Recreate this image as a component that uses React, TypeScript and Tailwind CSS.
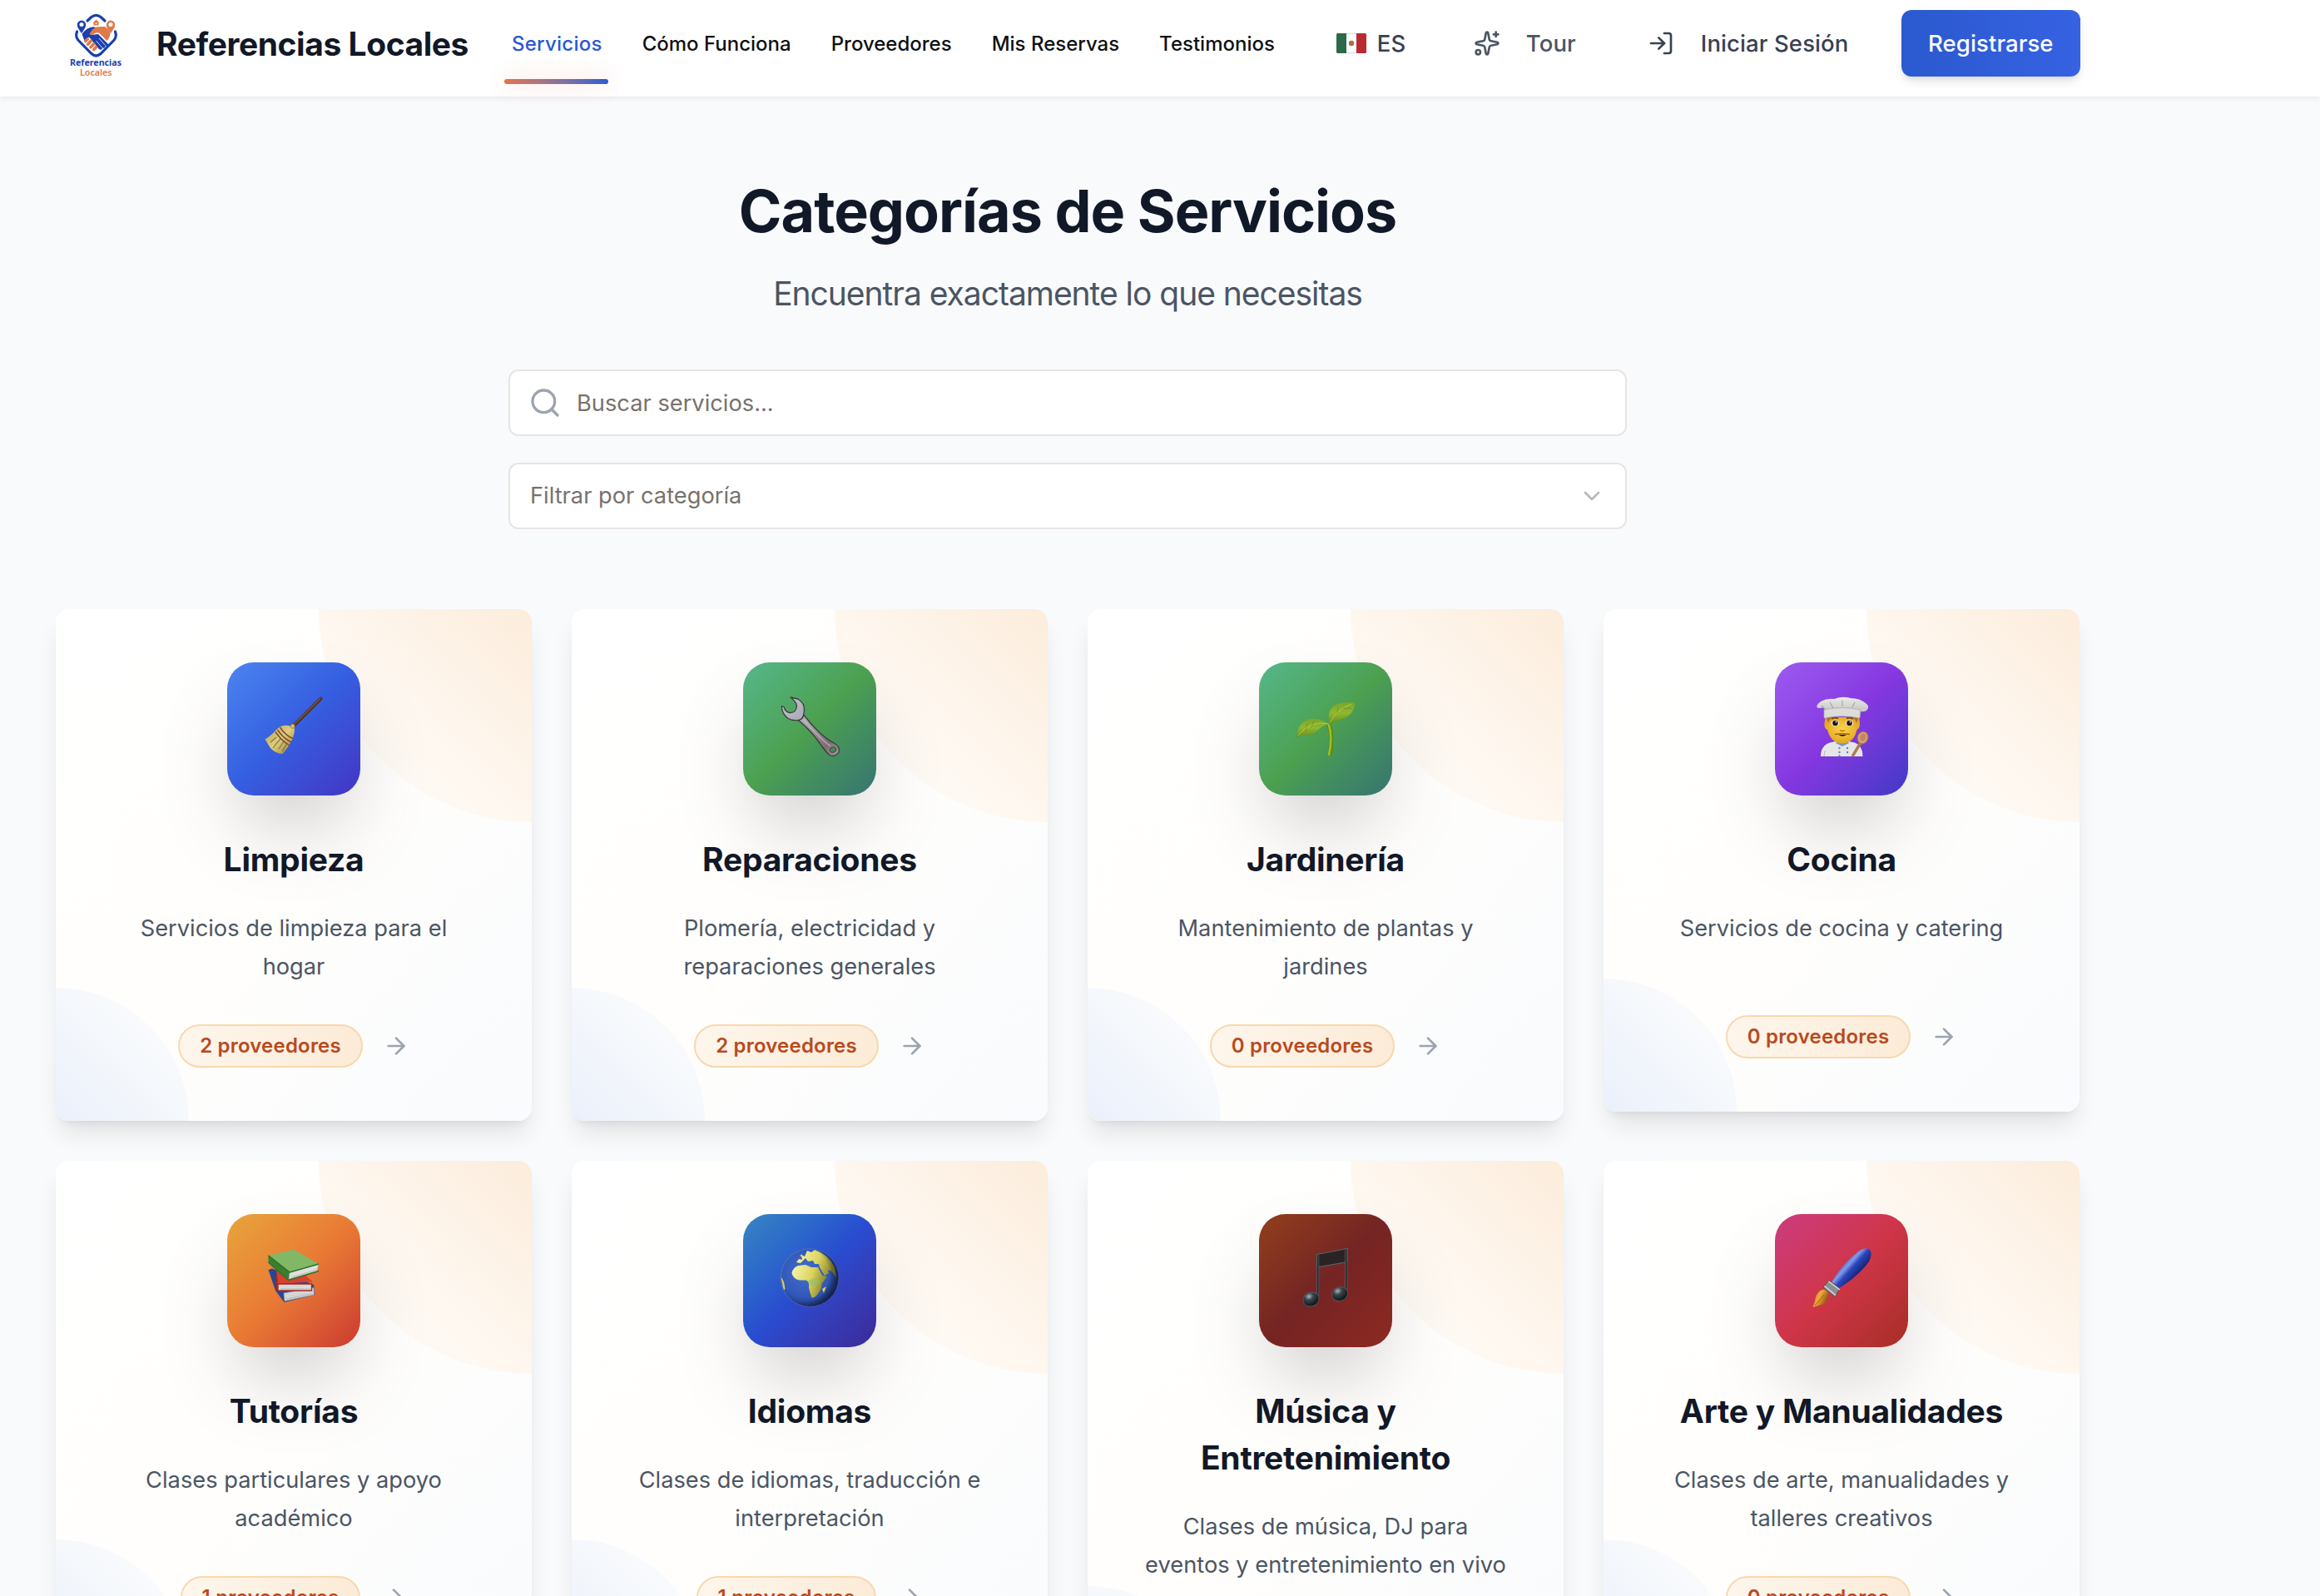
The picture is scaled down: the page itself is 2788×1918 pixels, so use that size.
import type { ReactNode } from "react";
import { ArrowRight, ChevronDown, LogIn, Search, Sparkles } from "lucide-react";

function Logo() {
  return (
    <svg viewBox="0 0 84 90" className="h-[90px] w-[84px] shrink-0" fill="none">
      <g stroke="#1b3fae" strokeWidth="3.2" strokeLinecap="round">
        <path d="M31 17 L35.5 12.8 Q41.5 7.8 47.5 12.8 L52 17" />
        <path d="M18.6 30 Q16.2 35.5 19.8 40 L36 56.5 Q41.5 61.5 47 56.5 L63.2 40 Q66.8 35.500 64.400 30" />
      </g>
      <path d="M24 32 C20.500 27 18.800 24.500 18.800 21.700 a5.200 5.200 0 0 1 10.400 0 C29.200 24.500 27.500 27 24 32Z" fill="#1b3fae" />
      <circle cx="24" cy="21.500" r="2.500" fill="#fff" />
      <path d="M59 32 C55.500 27 53.800 24.500 53.800 21.700 a5.200 5.200 0 0 1 10.400 0 C64.200 24.500 62.500 27 59 32Z" fill="#dc7a48" />
      <circle cx="59" cy="21.500" r="2.500" fill="#fff" />
      <path d="M37.500 19.500 L41.500 15.500 L45.500 19.500 L44.500 19.500 V22.500 H38.500 V19.500Z" fill="#dc7a48" />
      <rect x="40.800" y="19.300" width="1.600" height="1.800" fill="#fff" />
      <path d="M24.500 33 Q29 25.500 38 24.200 L42 25 L35 34 L44 33 L56 45 Q55.500 48 52.500 47 Q52.500 50.500 49 49.500 Q48.500 53 45 51 L33 36.500 L27.500 41 Z" fill="#1b3fae" />
      <path d="M33.500 32.500 Q37 25.500 43 24.200 L52 24 Q57 27 58.500 32 Q58 38 54.500 41 L45.500 32 Q41 30 37 34 Q34 34.500 33.500 32.500Z" fill="#dc7a48" />
      <g stroke="#dc7a48" strokeWidth="3.600" strokeLinecap="round">
        <path d="M28.800 41.500 L31.300 38.800" />
        <path d="M31.600 45.300 L35.300 41.300" />
        <path d="M35 48.800 L38.700 44.800" />
        <path d="M38.800 51.600 L41.500 48.500" />
      </g>
      <g stroke="#fff" strokeWidth="0.8">
        <path d="M45 38 L52.500 46.500" />
        <path d="M41.500 41 L49 49.500" />
      </g>
      <text x="10" y="70.700" textLength="62" lengthAdjust="spacingAndGlyphs" fontFamily="Noto Sans, sans-serif" fontWeight="700" fontSize="11" fill="#1b3fae">Referencias</text>
      <text x="22" y="82.700" textLength="38.500" lengthAdjust="spacingAndGlyphs" fontFamily="Noto Sans, sans-serif" fontWeight="600" fontSize="11" fill="#dc7a48">Locales</text>
    </svg>
  );
}

function MexicoFlag() {
  return (
    <svg viewBox="0 0 36 24" className="h-6 w-9 shrink-0">
      <rect width="36" height="24" rx="1.500" fill="#fff" />
      <path d="M1.500 0 H12 V24 H1.500 Q0 24 0 22.500 V1.500 Q0 0 1.500 0Z" fill="#2b6a4a" />
      <path d="M24 0 H34.500 Q36 0 36 1.500 V22.500 Q36 24 34.500 24 H24Z" fill="#bb2a31" />
      <path d="M12 0.500 H24 M12 23.500 H24" stroke="#d5dcd9" />
      <circle cx="18" cy="12" r="3.200" fill="#a5714a" />
    </svg>
  );
}

function Broom() {
  return (
    <>
      <defs>
        <linearGradient id="straw" x1="0" y1="0" x2="1" y2="1">
          <stop offset="0" stopColor="#b39a4f" />
          <stop offset="0.5" stopColor="#dfcd80" />
          <stop offset="1" stopColor="#8d7430" />
        </linearGradient>
      </defs>
      <path d="M36 36 L68.500 3.500" stroke="#4d3023" strokeWidth="4" strokeLinecap="round" />
      <path d="M36 35 L68 3.200" stroke="#7d553b" strokeWidth="1.400" strokeLinecap="round" />
      <path d="M32 36.500 Q35 33.500 37 36.500 Q37.500 44 35 51 Q30.500 61 22.500 70 Q14 69.500 8 63 L1.500 52.500 Q10 47 15 41 Q22 33.500 32 36.500Z" fill="url(#straw)" />
      <path d="M13 60 L20 52 M18 64 L24 55 M8 56 L15 50 M22 67 L28 57 M11 63 L17 55" stroke="#6e5a22" strokeWidth="1.200" opacity="0.700" />
      <path d="M14 43.500 Q21 54 30.500 59.500 M16.500 41 Q23 51 33 56 M19.500 38 Q26 48 35 51.500" stroke="#7a4a2b" strokeWidth="1.400" fill="none" />
      <circle cx="34.700" cy="36.700" r="2.600" fill="#d8c06e" stroke="#7a5a2b" strokeWidth="0.600" />
    </>
  );
}

function Wrench() {
  return (
    <>
      <defs>
        <linearGradient id="steel" x1="0" y1="0" x2="1" y2="1">
          <stop offset="0" stopColor="#c3c5d2" />
          <stop offset="0.450" stopColor="#a7a4ac" />
          <stop offset="0.800" stopColor="#7c6c6e" />
          <stop offset="1" stopColor="#a59ea3" />
        </linearGradient>
      </defs>
      <path d="M13 2 L22 4 Q30 9 29.500 17 Q29.500 20 28.500 22.500 Q37 34 47 43.500 Q55 51.500 66 57.500 Q73 61.500 71 68 Q67 74.500 60 71.500 Q56 68 51 61.500 Q43 49 32 38 L22.500 29.500 Q15 30.500 9.500 27 Q2 21 2.500 12.500 L5 13.500 Q7 20 12 20.500 Q20 21 20.500 12 Q19.500 7 13 2Z" fill="url(#steel)" stroke="#3e3b3c" strokeWidth="1.300" strokeLinejoin="round" />
      <path d="M28 28 Q37 39 46 47.500 Q54 56 61 60.500" stroke="#c9c6cd" strokeWidth="1.500" fill="none" opacity="0.600" />
      <path d="M28.500 23.500 Q28 28 23 29.500" stroke="#3b3335" strokeWidth="1.500" fill="none" />
      <ellipse cx="64" cy="65" rx="3.800" ry="3" transform="rotate(-25 64 65)" fill="#438a5e" stroke="#4b4445" />
    </>
  );
}

function Seedling() {
  return (
    <>
      <defs>
        <linearGradient id="leaf" x1="0" y1="0" x2="0" y2="1">
          <stop offset="0" stopColor="#7ba528" />
          <stop offset="0.500" stopColor="#8fb82e" />
          <stop offset="1" stopColor="#688c18" />
        </linearGradient>
      </defs>
      <path d="M39.500 34 Q46 50 40.500 72" stroke="#5f8a14" strokeWidth="5.500" fill="none" />
      <path d="M39.500 34 Q45 50 39.800 72" stroke="#98bf2c" strokeWidth="2.600" fill="none" />
      <path d="M0.500 50.500 Q3 31 18 27.500 Q29 26.500 39.500 34 Q32 36 26 42 Q18 49 7 47 Q3 48 0.500 50.500Z" fill="url(#leaf)" />
      <path d="M40.500 34 Q37 17 48 11 Q57 6.500 71.500 8.500 Q70 21 61 26 Q50 30 40.500 34Z" fill="url(#leaf)" />
      <path d="M3 48 Q17 30 39 33.500 M41 33 Q49 17 67 10" stroke="#b8ce62" strokeWidth="0.800" fill="none" />
      <path d="M12 43 L14 33 M19 38 L22 30 M50 21 L51 13 M57 15.500 L67 15" stroke="#5f8414" strokeWidth="1" opacity="0.500" />
    </>
  );
}

function Chef() {
  return (
    <>
      <defs>
        <radialGradient id="face" cx="0.500" cy="0.450" r="0.600">
          <stop offset="0" stopColor="#fbd44a" />
          <stop offset="1" stopColor="#dfa01c" />
        </radialGradient>
        <linearGradient id="hat" x1="0" y1="0" x2="0" y2="1">
          <stop offset="0" stopColor="#ebebe9" />
          <stop offset="1" stopColor="#b5b4b1" />
        </linearGradient>
      </defs>
      <path d="M11 73 Q11 60 22 56.500 L33 54 H40 L52 56.500 Q61.500 60 61.500 73Z" fill="#e6e6e4" />
      <path d="M15 73 L16 66" stroke="#b9b9b9" />
      <path d="M29 57 L37 61 L45 57 L43 55 H31Z" fill="#6d97cf" />
      <path d="M33 52 H42 L37.500 59Z" fill="#cf8d19" />
      <path d="M17 26 Q13 39 19 41 Q23 57 37 57.500 Q51 57 54.500 41 Q60 39 57 26Z" fill="url(#face)" />
      <path d="M18 25 L20 33 Q22 26 28 25Z M56.500 25 L54 33 Q52 26 46 25Z" fill="#a8702c" />
      <path d="M24 28 Q28 25 32 27.500 M42 27.500 Q46 25 50 28" stroke="#7c4a16" strokeWidth="2" fill="none" />
      <ellipse cx="28.500" cy="33" rx="4.500" ry="3.800" fill="#fff" />
      <ellipse cx="45.500" cy="33" rx="4.500" ry="3.800" fill="#fff" />
      <circle cx="28.500" cy="33" r="3.300" fill="#23150d" />
      <circle cx="45.500" cy="33" r="3.300" fill="#23150d" />
      <circle cx="29.500" cy="31.500" r="0.900" fill="#fff" />
      <circle cx="46.500" cy="31.500" r="0.900" fill="#fff" />
      <path d="M34 41.500 Q37 43.500 40 41.500" stroke="#b36e12" strokeWidth="1.500" fill="none" />
      <path d="M28 46.500 Q37 45 46 46.500" stroke="#a3651c" strokeWidth="1.400" fill="none" />
      <path d="M32.500 47 H42 Q37 50.500 32.500 47Z" fill="#25120a" />
      <path d="M15 14 Q8 16 6.500 14 Q5 11 12 6.500 Q18 3 27 4 Q37 0 47 3 Q58 3 65 9 Q70 12 67 17 Q64 20 59 19 L58 26.500 Q37 21 15 27Z" fill="url(#hat)" />
      <path d="M15 17 Q37 12 58.500 17 L58 27 Q37 22.500 15 27Z" fill="#dcdcda" stroke="#a9a8a5" strokeWidth="0.700" />
      <path d="M22 8 L26 15 M37 6 V13 M52 8 L49 14 M12 12 L17 17" stroke="#a7a6a3" strokeWidth="1.200" />
      <g fill="#5c87c9">
        <circle cx="33.500" cy="63" r="1.200" /><circle cx="33.500" cy="68" r="1.200" /><circle cx="33.500" cy="72" r="1.100" />
        <circle cx="43" cy="63" r="1.200" /><circle cx="43" cy="68" r="1.200" />
      </g>
      <path d="M49 73 L60 55" stroke="#b27a55" strokeWidth="3.400" />
      <ellipse cx="61.500" cy="50.500" rx="6.300" ry="7.500" transform="rotate(20 61.500 50.500)" fill="#d9a07a" stroke="#a86f4b" strokeWidth="1.200" />
      <ellipse cx="61.800" cy="50" rx="3.400" ry="4.600" transform="rotate(20 61.800 50)" fill="#c48660" />
    </>
  );
}

function Books() {
  return (
    <>
      <path d="M5.500 27 L10 25.500 L60 45 L61.500 57 L24.500 66 L14 52Z" fill="#2a4690" />
      <path d="M24 55 L60 48.500 L60.500 57 L25 64.500Z" fill="#d5d5d6" stroke="#98989c" strokeWidth="0.600" />
      <path d="M15 27 L46 30 L59 41.500 L17 44Z" fill="#d7412f" />
      <path d="M15 27 L17 44 V52.500 L14.500 50Z" fill="#a52a20" />
      <path d="M17 44 H57.500 V52 H17Z" fill="#dadada" stroke="#a52a20" strokeWidth="1.400" />
      <path d="M5.500 10 L36 2.500 L66 20 L31 30Z" fill="#82b865" />
      <path d="M5.500 10 L31 30 L29.500 39.500 L5.500 18Z" fill="#3a7f2e" />
      <path d="M31 30 L66 20 L64 28.500 L30 38.500Z" fill="#e0e0df" stroke="#9d9d9c" strokeWidth="0.600" />
      <path d="M5.500 10 L31 30 L66 20 M5.500 18 L29.500 39.500 L66 28.500" stroke="#2f7427" strokeWidth="1.600" fill="none" strokeLinejoin="round" />
      <path d="M33 36 L63 27 M20 50 H56 M27 62 L59 55.500" stroke="#a7a7a7" strokeWidth="0.700" />
    </>
  );
}

function Globe() {
  return (
    <>
      <defs>
        <radialGradient id="sea" cx="0.420" cy="0.420" r="0.600">
          <stop offset="0" stopColor="#466fce" />
          <stop offset="0.700" stopColor="#3058b8" />
          <stop offset="1" stopColor="#22357a" />
        </radialGradient>
        <linearGradient id="land" x1="0" y1="0" x2="1" y2="0.300">
          <stop offset="0" stopColor="#f7f6b4" />
          <stop offset="0.600" stopColor="#dcd45e" />
          <stop offset="1" stopColor="#8d8a2e" />
        </linearGradient>
        <radialGradient id="shade" cx="0.380" cy="0.450" r="0.650">
          <stop offset="0.700" stopColor="#000" stopOpacity="0" />
          <stop offset="1" stopColor="#060a20" stopOpacity="0.600" />
        </radialGradient>
      </defs>
      <circle cx="36" cy="36.500" r="34.800" fill="url(#sea)" stroke="#5d7bb8" strokeWidth="0.800" />
      <path d="M14.500 31 Q16 24 22 22 L31 21 L38 24 L46 24 L49 30 L51.500 34 L57 35 L50.500 44 Q50.500 50 46.500 55 Q43 60.500 38.500 60.500 Q36 54 35 48 Q36 42 32 39.500 L24 39.500 Q16 38 14.500 31Z" fill="url(#land)" />
      <path d="M20 18 L23 14 L27 15 L26 9 L30 11 L33 4 L38 6 L42 3 Q58 8 66 24 L68 37 L63 29 L58 27 L59 31 L54 34 L48 24 L47 20 L42 20 L40 16 L34 17 L31 13 L25 19Z" fill="url(#land)" />
      <path d="M24 10 L27 8 L27 12Z M51 50 L56 47 L53 55Z M1.500 36 Q5 38 6.500 50 Q5 53 4 48Z" fill="#d9cd52" />
      <path d="M34 40 L45 36 L49 42 L43 47 L37 46Z" fill="#8fc06c" opacity="0.600" />
      <circle cx="36" cy="36.500" r="35" fill="url(#shade)" />
    </>
  );
}

function Music() {
  return (
    <>
      <defs>
        <radialGradient id="bead" cx="0.450" cy="0.250" r="0.750">
          <stop offset="0" stopColor="#a9b6be" />
          <stop offset="0.350" stopColor="#3b4448" />
          <stop offset="1" stopColor="#0c0e10" />
        </radialGradient>
      </defs>
      <path d="M25.500 8.500 L62 1.500 V17.500 L25.500 24Z" fill="#2a2324" stroke="#596469" strokeWidth="1.200" />
      <path d="M26.700 9 V58 M60.800 3 V52" stroke="#5d686e" strokeWidth="3" />
      <path d="M26.700 9 V58 M60.800 3 V52" stroke="#22272a" strokeWidth="1.600" />
      <ellipse cx="18.500" cy="62.500" rx="9.800" ry="8.300" transform="rotate(-22 18.500 62.500)" fill="url(#bead)" stroke="#4f5b63" strokeWidth="0.900" />
      <ellipse cx="53" cy="56" rx="9.800" ry="8.300" transform="rotate(-22 53 56)" fill="url(#bead)" stroke="#4f5b63" strokeWidth="0.900" />
    </>
  );
}

function Paintbrush() {
  return (
    <>
      <defs>
        <linearGradient id="handle" x1="0.250" y1="0.250" x2="0.700" y2="0.650">
          <stop offset="0" stopColor="#2138a8" />
          <stop offset="0.400" stopColor="#7f9bea" />
          <stop offset="0.600" stopColor="#2b45bd" />
          <stop offset="1" stopColor="#141f6b" />
        </linearGradient>
        <linearGradient id="bristle" x1="0" y1="0" x2="1" y2="0.500">
          <stop offset="0" stopColor="#c97a1e" />
          <stop offset="0.500" stopColor="#f0a83a" />
          <stop offset="1" stopColor="#8a4c10" />
        </linearGradient>
      </defs>
      <path d="M24 42 Q37 20 55 6 Q64 -1 69.500 2.500 Q74 7 69 17 Q56 35 33 49Z" fill="url(#handle)" />
      <path d="M21 39.500 L34 49.500 L28 59.500 L14 48Z" fill="#8f8f90" stroke="#4f4f50" strokeWidth="0.900" />
      <path d="M20.500 41 L34 51 M15.500 46.500 L29 57.500" stroke="#dedede" strokeWidth="1.200" />
      <path d="M13 51 Q18 50 20.500 56 Q21 63 15 68 Q8 70 1.500 72 Q4 66 5 60 Q7 53 13 51Z" fill="url(#bristle)" />
      <path d="M4 70 L15 57" stroke="#9c5b15" strokeWidth="1" />
    </>
  );
}

type Category = {
  title: string[];
  text: string[];
  providers: string;
  tile: string;
  art: ReactNode;
};

const categories: Category[] = [
  { title: ["Limpieza"], text: ["Servicios de limpieza para el", "hogar"], providers: "2 proveedores", tile: "from-[#4c84f0] via-[#355ee0] to-[#4134c4]", art: <Broom /> },
  { title: ["Reparaciones"], text: ["Plomería, electricidad y", "reparaciones generales"], providers: "2 proveedores", tile: "from-[#55b88a] via-[#4ca04f] to-[#37746f]", art: <Wrench /> },
  { title: ["Jardinería"], text: ["Mantenimiento de plantas y", "jardines"], providers: "0 proveedores", tile: "from-[#55b88a] via-[#4ca04f] to-[#37746f]", art: <Seedling /> },
  { title: ["Cocina"], text: ["Servicios de cocina y catering"], providers: "0 proveedores", tile: "from-[#9d5af0] via-[#8537e0] to-[#3f38c6]", art: <Chef /> },
  { title: ["Tutorías"], text: ["Clases particulares y apoyo", "académico"], providers: "1 proveedores", tile: "from-[#e7a43b] via-[#e97a35] to-[#cb3730]", art: <Books /> },
  { title: ["Idiomas"], text: ["Clases de idiomas, traducción e", "interpretación"], providers: "1 proveedores", tile: "from-[#3985c2] via-[#294cd0] to-[#3b2998]", art: <Globe /> },
  { title: ["Música y", "Entretenimiento"], text: ["Clases de música, DJ para", "eventos y entretenimiento en vivo"], providers: "0 proveedores", tile: "from-[#923f1b] via-[#742423] to-[#8e2922]", art: <Music /> },
  { title: ["Arte y Manualidades"], text: ["Clases de arte, manualidades y", "talleres creativos"], providers: "0 proveedores", tile: "from-[#cc3b7e] via-[#cf3548] to-[#a72e25]", art: <Paintbrush /> },
];

function CategoryCard({ title, text, providers, tile, art }: Category) {
  return (
    <article className="relative overflow-hidden rounded-2xl bg-gradient-to-br from-white via-[#fffefc] to-[#f9fbfe] p-16 text-center shadow-[0_20px_30px_-6px_rgba(0,0,0,0.1),0_8px_12px_-8px_rgba(0,0,0,0.1)]">
      <div className="absolute right-0 top-0 size-64 rounded-bl-full bg-gradient-to-bl from-[#fcecdb] via-[#fef7ef] to-[#fffdfb]" />
      <div className="absolute bottom-0 left-0 size-40 rounded-tr-full bg-gradient-to-tr from-[#eaf0fb] via-[#f5f8fc] to-[#fdfdfd]" />
      <div className="relative flex flex-col items-center">
        <div className={"mb-[49px] flex size-40 items-center justify-center rounded-[32px] bg-gradient-to-br pb-2 shadow-[0_50px_100px_-24px_rgba(0,0,0,0.25)] " + tile}>
          <svg viewBox="0 0 72 72" className="size-[72px] overflow-visible">{art}</svg>
        </div>
        <h3 className="mb-8 whitespace-nowrap text-[39px] font-bold leading-[56px] tracking-[-0.25px] text-[#111827]">
          {title.map((line) => (<span key={line} className="block">{line}</span>))}
        </h3>
        <p className="mb-[47px] min-h-20 whitespace-nowrap text-[27.25px] leading-[45.500px] text-[#4b5563]">
          {text.map((line) => (<span key={line} className="block">{line}</span>))}
        </p>
        <div className="flex items-center gap-6">
          <span className="flex h-[52px] items-center whitespace-nowrap rounded-full border-2 border-[#f9d8ad] bg-gradient-to-r from-[#fef6ec] to-[#fcebd7] px-6 text-[24px] font-semibold leading-8 tracking-[0.2px] text-[#b84a1e]">
            {providers}
          </span>
          <ArrowRight className="size-8 text-[#9ca3af]" strokeWidth={2} />
        </div>
      </div>
    </article>
  );
}

const links = ["Cómo Funciona", "Proveedores", "Mis Reservas", "Testimonios"];

export default function App() {
  return (
    <div className="h-[1918px] w-[2788px] overflow-hidden bg-[#f9fafc] font-['Inter',sans-serif]">
      <header className="relative flex h-[116px] items-start bg-white shadow-[0_2px_6px_rgba(0,0,0,0.07)]">
        <div className="flex h-[105px] w-[615px] items-center">
          <div className="ml-[74px] flex w-[114px] items-center"><Logo /></div>
          <span className="whitespace-nowrap pt-px text-[39px] font-bold tracking-[-0.45px] text-[#111827]">Referencias Locales</span>
        </div>
        <nav className="flex h-[105px] items-center gap-12 text-[24px] font-medium leading-9 text-[#0f1113]">
          <a className="relative tracking-[0.25px] text-[#2b59d0]">
            Servicios
            <span className="absolute -left-[9px] top-[60px] h-1.5 w-[125px] rounded-sm bg-gradient-to-r from-[#e27445] to-[#2b59d0] shadow-[0_0_24px_rgba(232,100,60,0.3)]" />
          </a>
          {links.map((label) => (<a key={label} className="whitespace-nowrap">{label}</a>))}
        </nav>
        <div className="flex h-[104px] items-center whitespace-nowrap pl-[74px] text-[27.500px] font-medium tracking-[0.1px] text-[#374151]">
          <MexicoFlag />
          <span className="ml-[13px] w-9 pt-px">ES</span>
          <Sparkles className="ml-20 size-8 text-[#4b5563]" />
          <span className="ml-[31px] w-[60px] pt-px text-[#4b5563]">Tour</span>
          <LogIn className="ml-[86px] size-8" />
          <span className="ml-8 w-[177px] pt-px">Iniciar Sesión</span>
          <button className="ml-16 flex h-20 w-[215px] items-center justify-center rounded-xl bg-gradient-to-r from-[#2b59ce] to-[#3662e3] pt-px text-white shadow-[0_8px_12px_-2px_rgba(0,0,0,0.1),0_4px_8px_-4px_rgba(0,0,0,0.1)]">Registrarse</button>
        </div>
      </header>
      <main className="ml-[67px] w-[2432px]">
        <div className="flex flex-col items-center pt-[102px]">
          <h1 className="text-[70px] font-bold leading-[72px] tracking-[-1px] text-[#111827]">Categorías de Servicios</h1>
          <p className="mt-[35px] text-[39px] leading-[56px] tracking-[-1.03px] text-[#4b5563]">Encuentra exactamente lo que necesitas</p>
          <div className="mt-[63px] flex w-[1344px] flex-col gap-8 text-[27.25px] text-[#78716c]">
            <div className="flex h-20 items-center gap-[18px] rounded-xl border-2 border-[#e7e5e4] bg-white px-[22px]">
              <Search className="size-10 text-[#9ca3af]" />
              <span className="pt-[3px]">Buscar servicios...</span>
            </div>
            <div className="flex h-20 items-center justify-between rounded-xl border-2 border-[#e7e5e4] bg-white pl-6 pr-6">
              <span className="pt-px">Filtrar por categoría</span>
              <ChevronDown className="size-8 text-[#bbb8b5]" />
            </div>
          </div>
        </div>
        <div className="mt-24 grid grid-cols-4 items-start gap-12">
          {categories.map((category) => (<CategoryCard key={category.title[0]} {...category} />))}
        </div>
      </main>
    </div>
  );
}
